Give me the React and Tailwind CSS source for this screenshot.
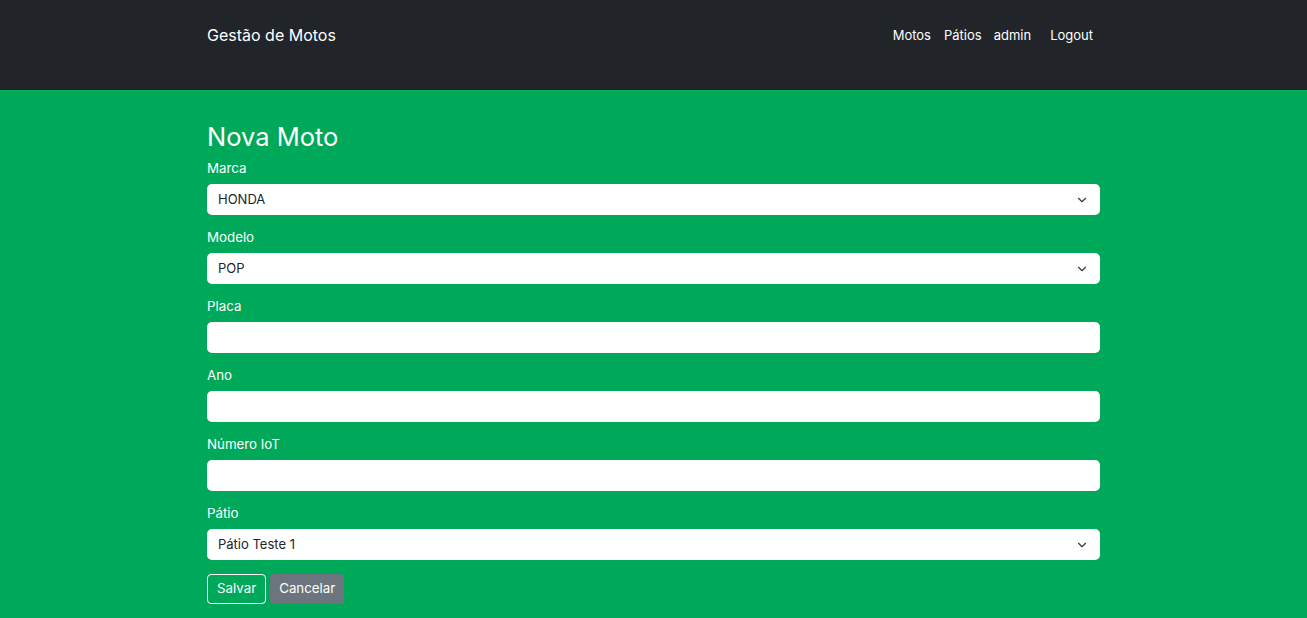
import { ChevronDown } from 'lucide-react';

const fields = [
  { label: 'Marca', type: 'select', value: 'HONDA' },
  { label: 'Modelo', type: 'select', value: 'POP' },
  { label: 'Placa', type: 'text' },
  { label: 'Ano', type: 'text' },
  { label: 'Número IoT', type: 'text' },
  { label: 'Pátio', type: 'select', value: 'Pátio Teste 1' },
];

function Field({ label, type, value }) {
  return (
    <div className="mb-[12px]">
      <label className="mb-[5px] block text-[13.3px] leading-[21px] text-white">{label}</label>
      <div className="flex h-[31px] items-center justify-between rounded-[5px] bg-white px-[11px] text-[13px] text-[#212529]">
        <span>{type === 'select' ? value : ''}</span>
        {type === 'select' && <ChevronDown className="h-[14px] w-[14px] text-[#343a40]" strokeWidth={2} />}
      </div>
    </div>
  );
}

export default function App() {
  return (
    <div className="min-h-[618px] bg-[#00a859] font-['Inter',sans-serif]">
      <nav className="h-[90px] bg-[#212529]">
        <div className="mx-auto flex w-[893px] items-center justify-between pt-[24px]">
          <span className="text-[16px] leading-[22px] text-white">Gestão de Motos</span>
          <div className="flex items-center pt-[1px] text-[13px] text-white">
            <span>Motos</span>
            <span className="ml-[13px]">Pátios</span>
            <span className="ml-[12px]">admin</span>
            <span className="ml-[19px] mr-[7px]">Logout</span>
          </div>
        </div>
      </nav>
      <main className="mx-auto w-[893px] pt-[31px]">
        <h1 className="mb-[5px] text-[25.5px] leading-[32px] text-white">Nova Moto</h1>
        {fields.map((f) => (
          <Field key={f.label} {...f} />
        ))}
        <div className="flex gap-[4px] pt-[2px]">
          <button className="h-[30px] rounded-[4px] border border-white px-[9px] text-[13.3px] text-white">Salvar</button>
          <button className="h-[30px] rounded-[4px] bg-[#6c757d] px-[9px] text-[13.3px] text-white">Cancelar</button>
        </div>
      </main>
    </div>
  );
}
